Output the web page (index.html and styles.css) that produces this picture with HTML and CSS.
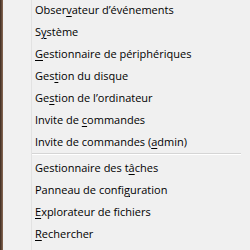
FILE: index.html
```html
<!DOCTYPE html>
<html>
<head>
<meta charset="utf-8">
<link rel="stylesheet" href="styles.css">
</head>
<body>
<div class="screen">
  <div class="desk"></div>
  <div class="menu">
    <div class="gutter"></div>
    <ul class="items">
      <li>Obser<u>v</u>ateur d’événements</li>
      <li>S<u>y</u>stème</li>
      <li><u>G</u>estionnaire de périphériques</li>
      <li>Ges<u>t</u>ion du disque</li>
      <li>Ge<u>s</u>tion de l’ordinateur</li>
      <li>Invite de <u>c</u>ommandes</li>
      <li>Invite de commandes (<u>a</u>dmin)</li>
      <li class="sep"></li>
      <li>Gestionnaire des t<u>â</u>ches</li>
      <li>Panneau de confi<u>g</u>uration</li>
      <li><u>E</u>xplorateur de fichiers</li>
      <li><u>R</u>echercher</li>
    </ul>
  </div>
</div>
</body>
</html>
```
FILE: styles.css
```css
html, body {
  margin: 0;
  padding: 0;
  width: 250px;
  height: 250px;
  overflow: hidden;
  background: #f0f0f0;
}
.screen {
  display: flex;
  height: 250px;
}
.desk {
  width: 3px;
  background: linear-gradient(to right, #3c2a20, #8a6a55);
}
.menu {
  flex: 1;
  display: flex;
  background: #f0f0f0;
}
.gutter {
  width: 28px;
  border-right: 1px solid #e2e2e2;
  background: #f1f1f1;
}
.items {
  list-style: none;
  margin: -1px 0 0 0;
  padding: 0 0 0 3px;
  flex: 1;
  font-family: "Open Sans", sans-serif;
  font-size: 11px;
  color: #000;
}
.items li {
  height: 22px;
  line-height: 22px;
  white-space: nowrap;
}
.items u {
  text-decoration-thickness: 1px;
  text-underline-offset: 2px;
}
.items li.sep {
  height: 1px;
  margin: 0 9px 2px -3px;
  background: #d5d5d5;
  border-bottom: 1px solid #fff;
}
```
